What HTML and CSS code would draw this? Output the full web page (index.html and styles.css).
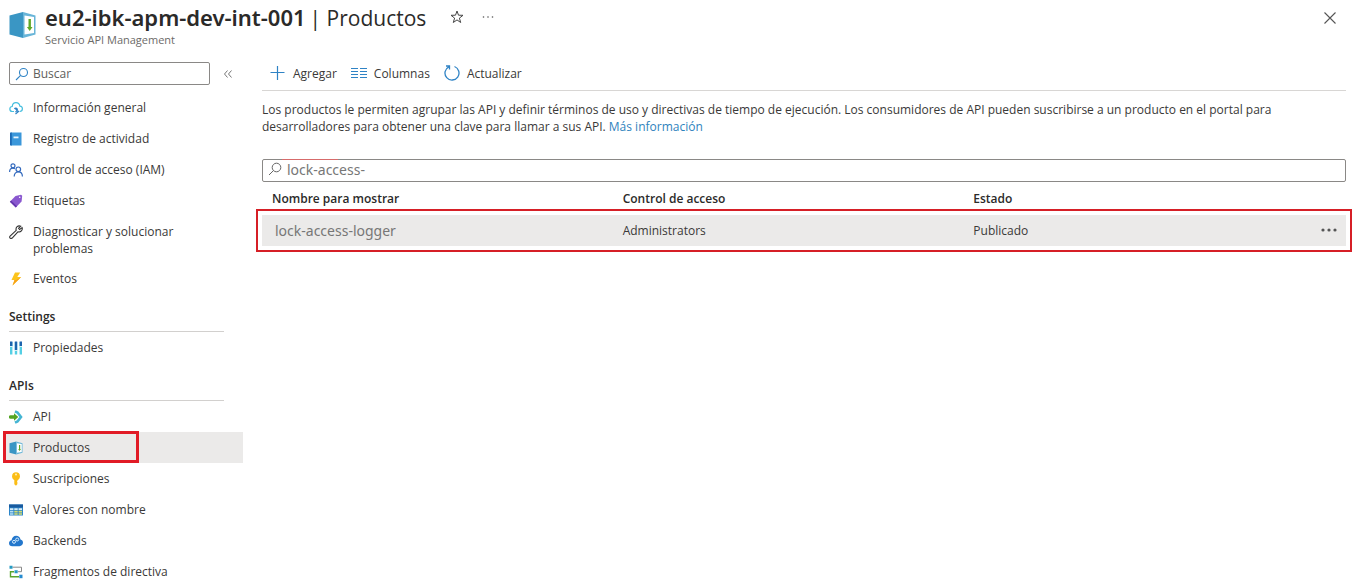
FILE: index.html
```html
<!DOCTYPE html>
<html lang="es">
<head>
<meta charset="utf-8">
<meta name="viewport" content="width=device-width, initial-scale=1">
<title>eu2-ibk-apm-dev-int-001 | Productos</title>
<link rel="stylesheet" href="styles.css">
</head>
<body>
<svg class="defs" aria-hidden="true">
  <symbol id="box" viewBox="0 0 28 28">
    <path fill="#3a96c4" d="M1 4.500 14.500 1v26L1 23.500z"/>
    <path fill="#68b5d8" d="M14.500 1 27 4.500v19L14.500 27z"/>
    <path fill="#fff" d="M16 4.500 25.500 6v16L16 23.500z"/>
    <path fill="#5da826" d="M20 8h2.400v8h1.600l-2.800 4-2.800-4H20z"/>
  </symbol>
</svg>
<header class="header">
  <svg class="logo" aria-hidden="true"><use href="#box"/></svg>
  <div class="heading">
    <div class="title-row">
      <h1 class="title"><b>eu2-ibk-apm-dev-int-001</b> <span>| Productos</span></h1>
      <button class="icon-btn star" aria-label="Favorito"><svg width="14" height="14" viewBox="0 0 14 14"><path d="M7 1 8.500 5.200l4.500.1-3.600 2.800 1.300 4.400L7 9.900l-3.700 2.600 1.300-4.400L1 5.300l4.500-.1z" fill="none" stroke="#444" stroke-width="1"/></svg></button>
      <button class="icon-btn" aria-label="Más opciones"><svg width="14" height="14" viewBox="0 0 14 14" fill="#555"><circle cx="2.500" cy="7" r=".8"/><circle cx="7" cy="7" r=".8"/><circle cx="11.500" cy="7" r=".8"/></svg></button>
    </div>
    <p class="subtitle">Servicio API Management</p>
  </div>
  <button class="icon-btn close" aria-label="Cerrar"><svg width="14" height="14" viewBox="0 0 14 14"><path d="M1.500 1.500l11 11m0-11-11 11" stroke="#555" stroke-width="1.100"/></svg></button>
</header>
<div class="layout">
  <aside class="sidebar">
    <div class="search-row">
      <label class="search">
        <svg width="14" height="14" viewBox="0 0 14 14" fill="none" stroke="#2f83c5" stroke-width="1.100"><circle cx="8.500" cy="5.500" r="4"/><path d="M5.600 8.400 1 13"/></svg>
        <input type="text" placeholder="Buscar" aria-label="Buscar">
      </label>
      <button class="icon-btn" aria-label="Contraer menú"><svg width="10" height="10" viewBox="0 0 10 10" fill="none" stroke="#777" stroke-width="1"><path d="M4.500 1.500 1.500 5l3 3.500M8.500 1.500 5.500 5l3 3.500"/></svg></button>
    </div>
    <nav>
      <ul class="menu">
        <li><a class="item" href="#"><svg class="ico" viewBox="0 0 14 14" fill="none" stroke="#45bede" stroke-width="1.200"><path d="M5 10.500H3.500a2.500 2.500 0 0 1-.3-5C3.500 3 5 1.700 7 1.700s3.500 1.300 3.900 3.500c1.500.1 2.500 1.200 2.500 2.600 0 1.600-1.200 2.700-2.700 2.700"/><path stroke="#2f83c5" d="M5.500 8a1.500 1.500 0 0 1 2.900.5c0 1.500-.8 2-2 2.300M6.500 7.800l3 2.700-3 2.500"/></svg>Información general</a></li>
        <li><a class="item" href="#"><svg class="ico" viewBox="0 0 14 14"><path fill="#3b97da" d="M2 .5h10.500v13H2a1 1 0 0 1-1-1v-11a1 1 0 0 1 1-1z"/><path fill="#1c69b5" d="M1 1.500a1 1 0 0 1 1-1h.8v13H2a1 1 0 0 1-1-1z"/><path fill="#e8f5ff" d="M4.500 4.500h5v1.800h-5z"/></svg>Registro de actividad</a></li>
        <li><a class="item" href="#"><svg class="ico" viewBox="0 0 14 14" fill="none" stroke="#3269bd" stroke-width="1.200"><circle cx="4" cy="2.800" r="2"/><path d="M.6 9c0-2.400 1.300-3.900 3.300-3.900.8 0 1.500.2 2 .6"/><circle cx="9.300" cy="6.300" r="2.300"/><path d="M5.200 13.500c0-2.800 1.600-4.700 4.100-4.700s4.100 1.900 4.100 4.700"/></svg>Control de acceso (IAM)</a></li>
        <li><a class="item" href="#"><svg class="ico" viewBox="0 0 14 14"><path fill="#8a58cf" d="M6.500 2 12 .7l1.200 1.100-.6 5.800-5.800 5.900L.9 7.700z"/><path fill="#6436ad" d="m.9 7.700 1.200-1.200 5.900 5.800-1.200 1.200z"/><circle cx="10.700" cy="3.300" r=".8" fill="#fff"/></svg>Etiquetas</a></li>
        <li><a class="item item-tall" href="#"><svg class="ico" viewBox="0 0 14 14" fill="none" stroke="#333" stroke-width="1.100"><path d="M11.800 1.200 9.600 3.300l1 1.200 2.500-1.900c.8 2.600-1.300 5-4.200 4.200L3.200 13c-1.600 1.300-3.300-.5-2.100-2L7.200 5.300C6.300 2.200 9 .1 11.800 1.200z"/></svg>Diagnosticar y solucionar problemas</a></li>
        <li><a class="item" href="#"><svg class="ico" viewBox="0 0 14 14"><path fill="#fcc41c" d="M6 .5h5.200L8.300 5h3.900L3.500 13.500l2-5.500H2.500z"/><path fill="#f6a117" d="M5.500 8h1.800l4.900-3L3.500 13.500z"/></svg>Eventos</a></li>
      </ul>
      <h2 class="group">Settings</h2>
      <ul class="menu">
        <li><a class="item" href="#"><svg class="ico" viewBox="0 0 14 14"><path fill="#54cfe4" d="M1 1h2.400v12.500H1zM5.800 1h2.400v12.500H5.800zM10.600 1H13v12.500h-2.400z"/><path fill="#1c63ad" d="M1 .5h2.400V5H1zM5.800.5h2.400V9H5.800zM10.600.5H13V5h-2.400z"/><path fill="#fff" d="M1 5h2.400v.8H1zM5.800 9h2.400v.8H5.800zM10.600 5H13v.8h-2.400z"/></svg>Propiedades</a></li>
      </ul>
      <h2 class="group">APIs</h2>
      <ul class="menu">
        <li><a class="item" href="#"><svg class="ico" viewBox="0 0 14 14"><path fill="none" stroke="#45b5d3" stroke-width="2.600" d="M6 1.300 8.500 2.500 12 7l-3.500 4.500L6 12.700"/><path fill="#53a524" d="M1.500 5.300H5V3.300L9.300 7 5 10.700v-2H1.500a1.700 1.700 0 0 1 0-3.400z"/></svg>API</a></li>
        <li><a class="item item-active" href="#" aria-current="page"><svg class="ico"><use href="#box"/></svg>Productos</a></li>
        <li><a class="item" href="#"><svg class="ico" viewBox="0 0 14 14"><circle cx="7" cy="4.200" r="3.900" fill="#fbbd16"/><path fill="#fbbd16" d="M5.300 7h3.400v1.500l-.8.800.8.900-.8.900.8.700L7 13.700l-1.700-1.500z"/><circle cx="7" cy="2.600" r="1" fill="#fff0b5"/></svg>Suscripciones</a></li>
        <li><a class="item" href="#"><svg class="ico" viewBox="0 0 14 14"><path fill="#2c85c9" d="M0 1.500h14v11H0z"/><path fill="#195a9e" d="M0 1.500h14v3H0z"/><path fill="#d8edf8" d="M1 5.300h3.400v1.800H1zM5.300 5.300h3.400v1.800H5.300zM9.600 5.300H13v1.800H9.600z"/><path fill="#d4dd70" d="M5.300 7.800h3.400v1.700H5.300zM9.600 7.800H13v1.700H9.600zM5.300 10.200h3.400v1.600H5.300zM9.600 10.200H13v1.600H9.600z"/><path fill="#b8dff1" d="M1 7.800h3.400v1.700H1zM1 10.200h3.400v1.600H1z"/></svg>Valores con nombre</a></li>
        <li><a class="item" href="#"><svg class="ico" viewBox="0 0 14 14"><path fill="#2377cc" d="M3.300 12.200C1.300 12.200 0 10.900 0 9.200c0-1.500 1.100-2.700 2.600-2.900C2.900 3.600 4.800 1.800 7.200 1.800c2.200 0 3.800 1.400 4.300 3.600 1.500.3 2.500 1.600 2.500 3.200 0 2.100-1.500 3.600-3.500 3.600z"/><circle cx="5" cy="7.800" r="1.500" fill="none" stroke="#d5edff"/><circle cx="8.200" cy="5.500" r="1.500" fill="none" stroke="#d5edff"/></svg>Backends</a></li>
        <li><a class="item" href="#"><svg class="ico" viewBox="0 0 14 14" fill="none"><path stroke="#888" d="M3.500 2.200h9v4.500H9"/><path stroke="#59a52c" stroke-width="1.400" d="M5 6.700H1.500v5H10"/><path fill="#259bc4" d="M.5.700h3v3h-3zM5.500 5.200h3.200v3H5.500z"/><path fill="#268bd0" d="M10.300 9.700h3.200v3.500h-3.200z"/></svg>Fragmentos de directiva</a></li>
      </ul>
    </nav>
  </aside>
  <main class="main">
    <div class="toolbar">
      <button class="tool"><svg width="16" height="16" viewBox="0 0 16 16" stroke="#2f83c5" stroke-width="1.200"><path d="M7.500 1v14M.5 7.500h14"/></svg>Agregar</button>
      <button class="tool"><svg width="16" height="16" viewBox="0 0 16 16" stroke="#2f83c5" stroke-width="1.200"><path d="M0 3.500h7M9 3.500h7M0 6.500h7M9 6.500h7M0 9.500h7M9 9.500h7M0 12.500h7M9 12.500h7"/></svg>Columnas</button>
      <button class="tool"><svg width="16" height="16" viewBox="0 0 16 16" fill="none" stroke="#2f83c5" stroke-width="1.300"><path d="M10.500 1.500A7 7 0 1 1 4.800 1.800M2 1h3.500v3.500"/></svg>Actualizar</button>
    </div>
    <p class="intro">Los productos le permiten agrupar las API y definir términos de uso y directivas de tiempo de ejecución. Los consumidores de API pueden suscribirse a un producto en el portal para desarrolladores para obtener una clave para llamar a sus API. <a href="#">Más información</a></p>
    <label class="search filter">
      <svg width="14" height="14" viewBox="0 0 14 14" fill="none" stroke="#666" stroke-width="1"><circle cx="8.500" cy="5.500" r="4.300"/><path d="M5.500 8.500 1 13"/></svg>
      <input type="text" value="lock-access-" aria-label="Filtrar productos">
    </label>
    <table class="products">
      <thead><tr><th>Nombre para mostrar</th><th>Control de acceso</th><th>Estado</th><th class="actions" aria-label="Acciones"></th></tr></thead>
      <tbody><tr><td class="name">lock-access-logger</td><td>Administrators</td><td>Publicado</td><td class="actions"><button class="icon-btn" aria-label="Acciones del producto"><svg width="18" height="6" viewBox="0 0 18 6" fill="#555"><circle cx="3" cy="2" r="1.600"/><circle cx="9" cy="2" r="1.600"/><circle cx="15" cy="2" r="1.600"/></svg></button></td></tr></tbody>
    </table>
  </main>
</div>
</body>
</html>
```
FILE: styles.css
```css
* { box-sizing: border-box; }
body { margin: 0; background: #fff; color: #3a3938; font: 12px/17px "Open Sans", "Noto Sans", sans-serif; }
h1, h2, p, ul { margin: 0; padding: 0; }
ul { list-style: none; }
a { color: inherit; text-decoration: none; }
button, input { font: inherit; color: inherit; }
button { display: flex; align-items: center; padding: 0; border: 0; background: none; cursor: pointer; }
svg { display: block; flex: none; }
.defs { position: absolute; width: 0; height: 0; }

.header { display: flex; align-items: flex-start; padding: 2px 17px 0 8px; height: 61px; }
.logo { width: 29px; height: 28px; margin-top: 9px; }
.heading { flex: 1; padding-left: 8px; }
.title-row { display: flex; align-items: center; height: 30px; }
.title { display: flex; align-items: baseline; gap: 4px; font-size: 22px; line-height: 30px; font-weight: 400; color: #2b2a29; white-space: nowrap; }
.title b { font-family: "Noto Sans", sans-serif; font-weight: 600; }
.title span { font-size: 21px; }
.star { margin: 0 17px 0 24px; }
.subtitle { font-size: 11px; line-height: 16px; color: #6c6a68; }
.close { margin-top: 9px; }

.layout { display: flex; align-items: flex-start; }
.sidebar { flex: none; width: 243px; padding-top: 1px; }
.search-row { display: flex; align-items: center; gap: 13px; padding-left: 9px; margin-bottom: 7px; }
.search { position: relative; display: flex; align-items: center; height: 23px; width: 201px; padding-left: 5px; border: 1px solid #8a8886; border-radius: 2px; }
.search input { flex: 1; min-width: 0; height: 21px; padding: 0 4px; border: 0; outline: 0; background: none; }
.search input::placeholder { color: #605e5c; opacity: 1; }

.item { position: relative; display: flex; gap: 10px; min-height: 31px; padding: 7px 60px 7px 9px; }
.item-tall { padding-bottom: 6px; }
.ico { width: 14px; height: 14px; margin-top: 2px; }
.item-active { margin-left: 4px; padding-left: 5px; background: #ebeae9; }
.item-active::after { content: ""; position: absolute; inset: -1px 104px 0 -1px; border: 3px solid #e11b26; }
.group { margin: 7px 19px 0 9px; padding: 7px 0 6px; border-bottom: 1px solid #d2d0ce; font-size: 12px; line-height: 17px; font-weight: 600; color: #2b2a29; }

.main { flex: 1; min-width: 0; padding: 1px 8px 0 19px; }
.toolbar { display: flex; gap: 14px; height: 29px; padding-left: 8px; border-bottom: 1px solid #d8d6d4; }
.tool { gap: 7px; height: 22px; }
.intro { padding: 10px 70px 24px 0; }
.intro a { color: #2f83bd; }
.filter { width: 100%; height: 23px; }
.filter::before { content: ""; position: absolute; top: -1px; left: 19px; width: 56px; height: 1px; background: #d76b6b; }
.filter svg { margin-bottom: 3px; }
.filter input { font-family: "Noto Sans", sans-serif; font-size: 14px; padding: 0 5px 3px; color: #777; }

.products { width: 100%; table-layout: fixed; border-collapse: collapse; text-align: left; }
.products th { height: 33px; padding: 0 10px; font-weight: 600; color: #2b2a29; }
.products td { height: 31px; padding: 0 10px; background: #ebeae9; }
.products tbody tr { outline: 2px solid #d61f26; outline-offset: 4px; }
.products .name { padding-left: 13px; font-family: "Noto Sans", sans-serif; font-size: 14px; color: #777; }
.products .actions { width: 32px; padding: 0; }
.products .actions button { margin-left: auto; padding-right: 8px; }
```
